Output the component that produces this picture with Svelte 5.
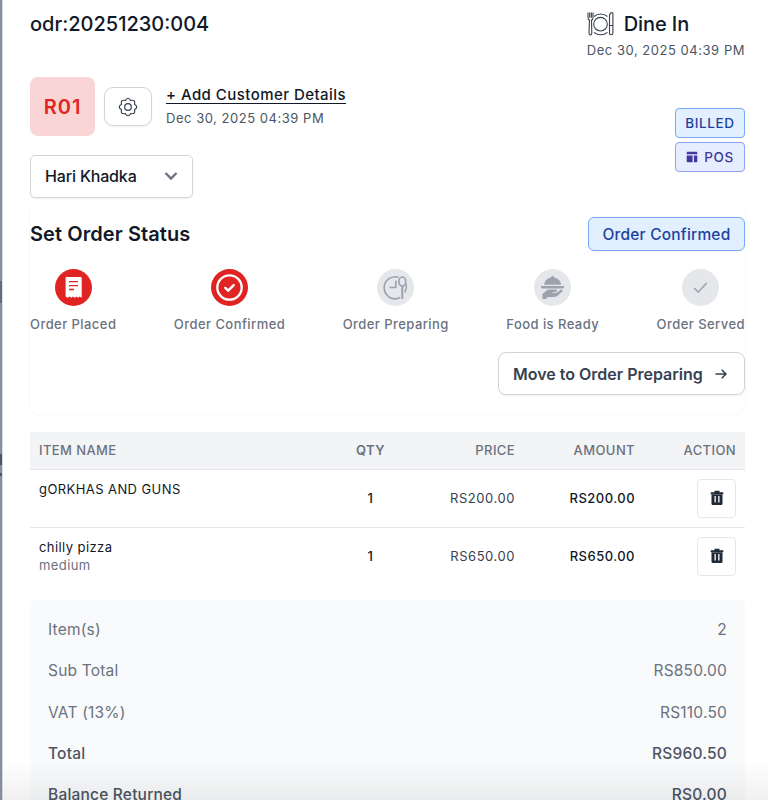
<script lang="ts">
  type Step = { label: string; icon: string; done?: boolean }
  type Item = { name: string; variant?: string; qty: number; price: string }
  type Total = { label: string; value: string; strong?: boolean }

  const date = 'Dec 30, 2025 04:39 PM'

  const steps: Step[] = [
    { label: 'Order Placed', icon: 'receipt', done: true },
    { label: 'Order Confirmed', icon: 'confirmed', done: true },
    { label: 'Order Preparing', icon: 'preparing' },
    { label: 'Food is Ready', icon: 'ready' },
    { label: 'Order Served', icon: 'served' },
  ]

  const items: Item[] = [
    { name: 'gORKHAS AND GUNS', qty: 1, price: 'RS200.00' },
    { name: 'chilly pizza', variant: 'medium', qty: 1, price: 'RS650.00' },
  ]

  const totals: Total[] = [
    { label: 'Item(s)', value: '2' },
    { label: 'Sub Total', value: 'RS850.00' },
    { label: 'VAT (13%)', value: 'RS110.50' },
    { label: 'Total', value: 'RS960.50', strong: true },
    { label: 'Balance Returned', value: 'RS0.00', strong: true },
  ]
</script>

{#snippet stepIcon(icon: string)}
  {#if icon === 'receipt'}
    <svg width="37" height="37" viewBox="0 0 37 37">
      <path fill="#fff" d="M11.3 8h14.4q1 0 1 1v19.8l-2-1.300-1.700 1.300-1.700-1.300-1.700 1.300-1.700-1.300-1.700 1.300-1.700-1.300-1.700 1.300-2.200-1.300V9q0-1 1-1z" />
      <path stroke="#e02424" stroke-width="1.4" d="M14 12.6h9M14 16.6h9M14 20.5h5" />
    </svg>
  {:else if icon === 'confirmed'}
    <svg width="37" height="37" viewBox="0 0 37 37" fill="none" stroke="#fff">
      <circle cx="18.5" cy="18.5" r="12.2" stroke-width="2.3" />
      <path stroke-width="2.4" stroke-linecap="round" stroke-linejoin="round" d="M14.3 18.9l2.9 2.8 5.5-5.6" />
    </svg>
  {:else if icon === 'preparing'}
    <svg width="37" height="37" viewBox="0 0 37 37" fill="none" stroke="#9ca3af">
      <path stroke-width="1.7" d="M21.500 8.300a11 11 0 1 0 1.700 20.300" />
      <path stroke-width="1.6" d="M18.8 11.5v7h-6.3" />
      <ellipse cx="25.3" cy="12.600" rx="3.400" ry="4.600" stroke-width="1.700" />
      <path stroke-width="2" d="M25.300 17v13" />
      <path stroke-width="1.500" d="M29.200 14.500q.6 5-1.100 9" />
    </svg>
  {:else if icon === 'ready'}
    <svg width="37" height="37" viewBox="0 0 37 37" fill="#9ca3af">
      <path d="M10 15.8a8.7 7.4 0 0 1 7-7.2 1.6 1.6 0 0 1 3.2 0 8.7 7.4 0 0 1 7 7.2z" />
      <path d="M7 17h23v1.300q-.5 1.200-2 1.200H9q-1.500 0-2-1.200z" />
      <path d="M8.200 25.300l4-3.600q1.200-1.100 3-1.100h6.500q1.600 0 1.300 1.400-.3 1-1.700 1h-3v.8h4.200l4-2.900q1.300-.7 1.900 0 .5.800-.5 1.900l-4.200 4q-1.300 1.100-3.200 1.100h-6.500l-2.300 2H8.600z" />
    </svg>
  {:else}
    <svg width="37" height="37" viewBox="0 0 37 37" fill="none" stroke="#9ca3af" stroke-width="1.500">
      <path stroke-linecap="round" stroke-linejoin="round" d="M12.700 19.600l3.600 3.500 7.900-8.700" />
    </svg>
  {/if}
{/snippet}

<main class="order">
  <header class="top">
    <h1>odr:20251230:004</h1>
    <div class="dining">
      <div class="dining-type">
        <svg width="28" height="26" viewBox="0 0 28 26" fill="none" stroke="#374151" stroke-width="1.100">
          <circle cx="13.500" cy="13.200" r="6.800" />
          <path d="M7 5.500a10.500 10.500 0 0 1 13.500 0M7 21.300a10.500 10.500 0 0 0 13.500 0" />
          <path d="M1 1.500v5q0 2.200 1.500 2.600L2 22q0 2 1.400 2t1.400-2L4.500 9.100Q6 8.700 6 6.500v-5M2.700 1.500v5.300M4.400 1.500v5.300" />
          <path d="M22.500 22V5q0-3 2.500-3.500.9 0 .9 1V22q0 1.700-1.700 1.700T22.500 22zM22.500 14.500h3.400" />
        </svg>
        <span>Dine In</span>
      </div>
      <div class="date">{date}</div>
    </div>
  </header>

  <section class="customer">
    <div class="table-no">R01</div>
    <button class="settings" aria-label="Settings">
      <svg width="20" height="20" viewBox="0 0 20 20" fill="none" stroke="#374151" stroke-width="1.200" stroke-linejoin="round">
        <circle cx="10" cy="10" r="3.300" />
        <path d="M16.470 7.320Q21 10 16.470 12.680 17.800 17.800 12.680 16.470 10 21 7.320 16.470 2.200 17.800 3.530 12.680-1 10 3.530 7.320 2.200 2.200 7.320 3.530 10-1 12.680 3.530 17.800 2.200 16.470 7.320z" />
      </svg>
    </button>
    <div class="customer-info">
      <a href="#customer">+ Add Customer Details</a>
      <div class="date">{date}</div>
    </div>
    <div class="badges">
      <span class="badge">BILLED</span>
      <span class="badge pos">
        <svg width="12" height="12" viewBox="0 0 12 12" fill="#42389d">
          <path d="M1.500.700h9q.8 0 .8.800v1.800H.7V1.500q0-.8.800-.8zM.7 4.500h5.900v6.800H1.500q-.8 0-.8-.8zM7.900 4.500h3.400v6q0 .8-.8.800H7.900z" />
        </svg>
        POS
      </span>
    </div>
  </section>

  <button class="waiter">
    Hari Khadka
    <svg width="14" height="10" viewBox="0 0 14 10" fill="none" stroke="#6b7280" stroke-width="2.400">
      <path d="M1.500 2L7 7.500 12.500 2" />
    </svg>
  </button>

  <section class="status">
    <div class="status-head">
      <h2>Set Order Status</h2>
      <span class="current">Order Confirmed</span>
    </div>
    <div class="steps">
      {#each steps as step}
        <div class="step">
          <div class="circle" class:done={step.done}>{@render stepIcon(step.icon)}</div>
          <div class="label">{step.label}</div>
        </div>
      {/each}
    </div>
    <button class="next">
      Move to Order Preparing
      <svg width="14" height="12" viewBox="0 0 14 12" fill="none" stroke="#374151" stroke-width="1.600" stroke-linecap="round" stroke-linejoin="round">
        <path d="M2 6h10M8.200 2.200L12 6 8.200 9.800" />
      </svg>
    </button>
  </section>

  <table>
    <thead>
      <tr>
        <th class="name">Item name</th>
        <th class="qty">Qty</th>
        <th class="price">Price</th>
        <th class="amount">Amount</th>
        <th class="action">Action</th>
      </tr>
    </thead>
    <tbody>
      {#each items as item}
        <tr>
          <td class="name">
            <div>{item.name}</div>
            {#if item.variant}
              <div class="variant">{item.variant}</div>
            {/if}
          </td>
          <td class="qty">{item.qty}</td>
          <td class="price">{item.price}</td>
          <td class="amount">{item.price}</td>
          <td class="action">
            <button class="delete" aria-label="Delete">
              <svg width="14" height="16" viewBox="0 0 14 16" fill="#1f2937">
                <path fill-rule="evenodd" d="M4.500.8h5v1.400h3.800v2H.7v-2h3.800zM1.500 4h11v9.500q0 1.500-1.500 1.500H3q-1.500 0-1.500-1.500zM4.500 6v6.500h1.300V6zM8.200 6v6.500h1.300V6z" />
              </svg>
            </button>
          </td>
        </tr>
      {/each}
    </tbody>
  </table>

  <section class="totals">
    {#each totals as row}
      <div class="total" class:strong={row.strong}>
        <span>{row.label}</span>
        <span>{row.value}</span>
      </div>
    {/each}
  </section>
  <div class="fade"></div>
</main>

<style>
  :global(body) {
    overflow: hidden;
  }
  .order {
    box-sizing: border-box;
    height: 800px;
    overflow: hidden;
    padding: 10px 23px 0 30px;
    font-family: Inter, sans-serif;
    color: #111928;
    background:
      linear-gradient(#646c79, #646c79) 0 281px / 2px 22px no-repeat,
      linear-gradient(#4b5563, #4b5563) 0 454px / 2px 11px no-repeat,
      linear-gradient(#4b5563, #4b5563) 0 473px / 2px 3px no-repeat,
      linear-gradient(#868e99, #868e99) 0 0 / 2px 100% no-repeat,
      linear-gradient(#dcdfe3, #dcdfe3) 2px 0 / 1px 100% no-repeat,
      #fff;
    position: relative;
  }
  button {
    font: inherit;
    padding: 0;
    box-sizing: border-box;
    background: #fff;
    border: 1px solid #d1d5db;
    box-shadow: 0 1px 2px rgba(0, 0, 0, 0.06);
  }
  svg {
    display: block;
    flex: none;
  }
  h1,
  h2 {
    margin: 0;
    font-size: 20px;
    line-height: 28px;
  }
  h1 {
    font-weight: 500;
  }
  h2 {
    font-weight: 600;
    letter-spacing: 0.08px;
  }
  .top {
    display: flex;
    justify-content: space-between;
    height: 67px;
  }
  .dining-type {
    display: flex;
    align-items: center;
    gap: 9px;
    height: 28px;
    font-size: 20px;
    font-weight: 500;
    letter-spacing: -0.1px;
  }
  .date {
    font-size: 13px;
    line-height: 20px;
    letter-spacing: 0.53px;
    color: #4b5563;
  }
  .dining .date {
    margin-top: 2px;
  }
  .customer {
    display: flex;
    height: 78px;
  }
  .table-no {
    width: 65px;
    height: 59px;
    border-radius: 8px;
    background: #f9d5d5;
    color: #e02424;
    font-size: 20px;
    font-weight: 600;
    line-height: 61px;
    text-align: center;
    letter-spacing: 1px;
  }
  .settings {
    display: flex;
    align-items: center;
    justify-content: center;
    width: 48px;
    height: 39px;
    margin: 10px 14px 0 9px;
    border-radius: 9px;
  }
  .customer-info {
    padding-top: 7px;
  }
  .customer-info a {
    display: block;
    height: 19px;
    line-height: 21px;
    border-bottom: 1px solid #111928;
    font-size: 15px;
    font-weight: 500;
    letter-spacing: 0.45px;
    color: #111928;
    text-decoration: none;
  }
  .customer-info .date {
    margin-top: 4px;
  }
  .badges {
    display: flex;
    flex-direction: column;
    gap: 4px;
    margin: 31px 0 0 auto;
  }
  .badge {
    display: flex;
    align-items: center;
    justify-content: center;
    gap: 6px;
    box-sizing: border-box;
    width: 70px;
    height: 30px;
    flex: none;
    border: 1px solid #76a9fa;
    border-radius: 4px;
    background: #e1effe;
    color: #1e429f;
    font-size: 13.500px;
    font-weight: 500;
    letter-spacing: 0.6px;
  }
  .pos {
    border-color: #8da2fb;
    background: #e5edff;
    color: #42389d;
  }
  .waiter {
    display: flex;
    align-items: center;
    justify-content: space-between;
    width: 163px;
    height: 43px;
    padding: 0 14px 1px;
    border-radius: 5px;
    font-size: 16px;
    font-weight: 500;
    letter-spacing: -0.16px;
    color: #111928;
  }
  .status {
    box-sizing: border-box;
    height: 211px;
    margin-top: 5px;
    padding-top: 13px;
    border-radius: 9px;
    box-shadow: 0 0 2px rgba(0, 0, 0, 0.09);
    clip-path: inset(6px -3px -3px);
  }
  .status-head {
    display: flex;
    align-items: center;
    justify-content: space-between;
    height: 35px;
  }
  .current {
    box-sizing: border-box;
    width: 157px;
    height: 34px;
    border: 1px solid #76a9fa;
    border-radius: 6px;
    background: #e1effe;
    color: #1e429f;
    font-size: 15.500px;
    font-weight: 500;
    line-height: 33px;
    text-align: center;
    letter-spacing: 0.2px;
  }
  .steps {
    display: flex;
    justify-content: space-between;
    margin-top: 18px;
  }
  .step {
    display: grid;
    justify-items: center;
  }
  .circle {
    width: 37px;
    height: 37px;
    border-radius: 50%;
    background: #e5e7eb;
  }
  .circle.done {
    background: #e02424;
  }
  .label {
    margin-top: 8px;
    font-size: 13px;
    font-weight: 500;
    line-height: 20px;
    letter-spacing: 0.44px;
    color: #6b7280;
    white-space: nowrap;
  }
  .next {
    display: flex;
    align-items: center;
    justify-content: space-between;
    width: 247px;
    height: 43px;
    margin: 18px 0 0 auto;
    padding: 0 16px 0 14px;
    border-radius: 8px;
    color: #374151;
    font-size: 16px;
    font-weight: 600;
  }
  table {
    width: 715px;
    margin-top: 18px;
    table-layout: fixed;
    border-collapse: collapse;
  }
  th {
    box-sizing: border-box;
    height: 37px;
    padding: 0 9px;
    background: #f3f4f6;
    border-bottom: 1px solid #e5e7eb;
    color: #6b7280;
    font-size: 13px;
    font-weight: 500;
    text-transform: uppercase;
    letter-spacing: 0.4px;
    text-align: right;
  }
  td {
    box-sizing: border-box;
    height: 58px;
    padding: 0 9px;
    font-size: 13px;
    letter-spacing: 0.55px;
    text-align: right;
  }
  tbody tr:first-child td {
    border-bottom: 1px solid #e5e7eb;
  }
  th.name {
    width: 290px;
    text-align: left;
  }
  td.name {
    padding-top: 10px;
    text-align: left;
    vertical-align: top;
    line-height: 18px;
    letter-spacing: 0.42px;
  }
  .variant {
    color: #6b7280;
  }
  .qty {
    width: 101px;
    text-align: center;
  }
  th.qty {
    font-weight: 600;
  }
  td.qty {
    font-weight: 500;
  }
  .price {
    width: 103px;
    color: #374151;
  }
  th.price {
    color: #6b7280;
  }
  .amount {
    width: 120px;
  }
  td.amount {
    font-weight: 500;
    letter-spacing: 0.48px;
  }
  .delete {
    display: flex;
    align-items: center;
    justify-content: center;
    width: 39px;
    height: 39px;
    margin-left: auto;
    border-color: #e5e7eb;
    border-radius: 4px;
    box-shadow: none;
  }
  .totals {
    margin-top: 15px;
    padding: 9px 18px;
    border-radius: 5px;
    background: #f9fafb;
    color: #6b7280;
    font-size: 15.500px;
    letter-spacing: 0.2px;
  }
  .total {
    display: flex;
    justify-content: space-between;
    height: 41.300px;
    line-height: 42px;
  }
  .strong {
    color: #4b5563;
    font-weight: 500;
  }
  .fade {
    position: absolute;
    inset: auto 0 0 2px;
    height: 40px;
    background: linear-gradient(transparent, rgba(0, 0, 0, 0.06));
    pointer-events: none;
  }
</style>
